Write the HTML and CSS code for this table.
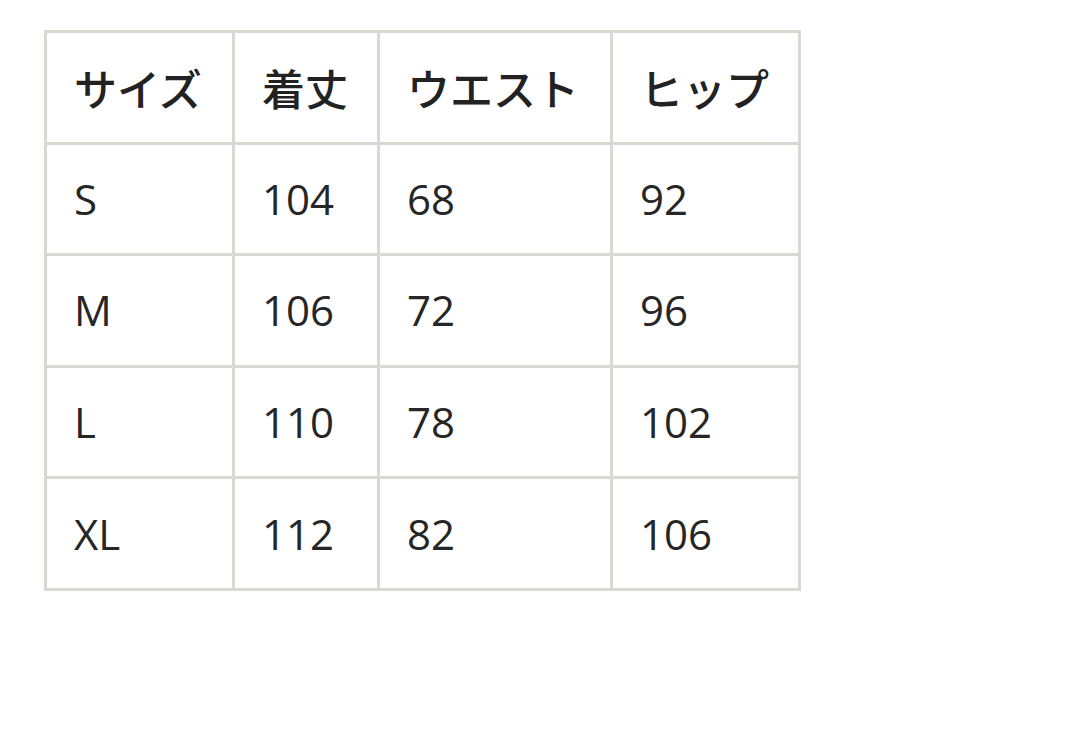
FILE: index.html
```html
<!DOCTYPE html>
<html lang="ja">
<head>
<meta charset="utf-8">
<link rel="stylesheet" href="styles.css">
</head>
<body>
<div class="page">
<table class="size-table">
<colgroup>
<col class="c1"><col class="c2"><col class="c3"><col class="c4">
</colgroup>
<thead>
<tr><th>サイズ</th><th>着丈</th><th>ウエスト</th><th>ヒップ</th></tr>
</thead>
<tbody>
<tr><td>S</td><td>104</td><td>68</td><td>92</td></tr>
<tr><td>M</td><td>106</td><td>72</td><td>96</td></tr>
<tr><td>L</td><td>110</td><td>78</td><td>102</td></tr>
<tr><td>XL</td><td>112</td><td>82</td><td>106</td></tr>
</tbody>
</table>
</div>
</body>
</html>
```
FILE: styles.css
```css
html, body {
  margin: 0;
  padding: 0;
  background: #ffffff;
}
.page {
  padding: 30px 0 0 44px;
}
.size-table {
  border-collapse: collapse;
  table-layout: fixed;
  width: 754px;
  color: #222222;
}
.c1 { width: 188px; }
.c2 { width: 145px; }
.c3 { width: 233px; }
.c4 { width: 188px; }
.size-table th,
.size-table td {
  border: 3px solid #d9d9d4;
  height: 111.6px;
  padding: 0 0 0 27px;
  text-align: left;
  vertical-align: middle;
  line-height: 1;
  box-sizing: border-box;
}
.size-table th {
  font-family: "Noto Sans CJK JP", sans-serif;
  font-size: 43px;
  font-weight: 500;
}
.size-table td {
  font-family: "Open Sans", "Noto Sans CJK JP", sans-serif;
  font-size: 42px;
  font-weight: 400;
  color: #262626;
}
```
